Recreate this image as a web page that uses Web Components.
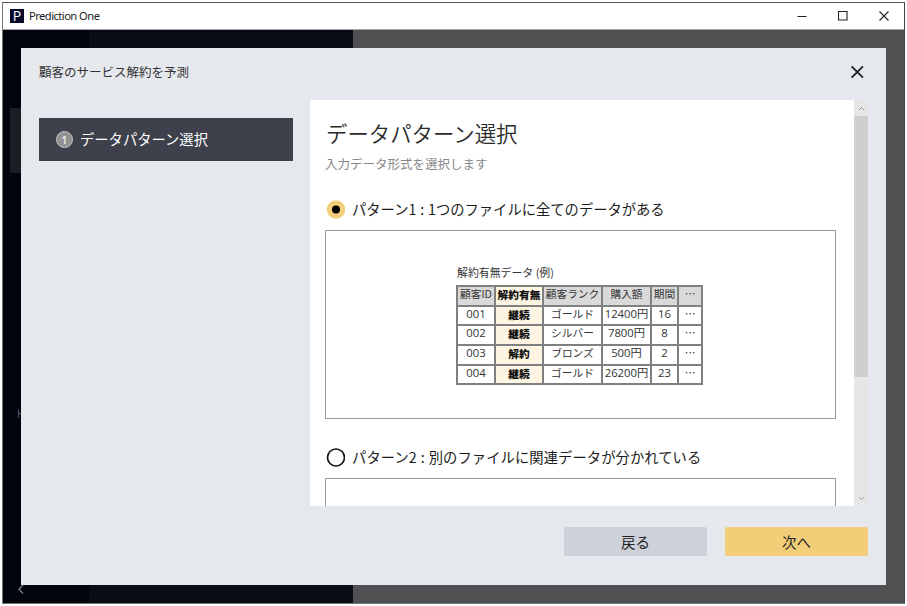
<!DOCTYPE html>
<html lang="ja">
<head>
<meta charset="utf-8">
<title>Prediction One</title>
<style>
html,body{margin:0;width:907px;height:606px;overflow:hidden;background:#fff}
body{font-family:"Noto Sans CJK JP",sans-serif;color:#222}
</style>
</head>
<body>
<app-window></app-window>
<script>
const define = (name, html, setup) => customElements.define(name, class extends HTMLElement {
  constructor() {
    super();
    this.attachShadow({mode: 'open'}).innerHTML = '<style>:host,*{box-sizing:border-box}</style>' + html;
  }
  connectedCallback() { if (setup) setup(this, this.shadowRoot); }
});

define('title-bar', `<style>
:host{display:flex;align-items:center;height:26px;flex:none;background:#fff;padding:0 15px 0 7px;color:#222}
.logo{width:14px;height:14px;background:#06092a;color:#fff;font:14px/14px "Open Sans",sans-serif;text-align:center;margin:-1px 5px 0 0}
.name{flex:1;font:11.2px/16px "Noto Sans",sans-serif;letter-spacing:-.55px}
svg{display:block;margin:-1px 0 0 31px}
</style><span class="logo">P</span><span class="name"><slot></slot></span>
<svg width="10" height="10" viewBox="0 0 10 10"><path d="M.5 5.5h9" stroke="#222"/></svg>
<svg width="10" height="10" viewBox="0 0 10 10"><path d="M.5.5h8.5v8.5H.5z" fill="none" stroke="#222" stroke-width="1.1"/></svg>
<svg width="10" height="10" viewBox="0 0 10 10"><path d="M.5.5l9 9M9.5.5l-9 9" stroke="#222" stroke-width="1.1"/></svg>`);

define('app-window', `<style>
:host{display:flex;flex-direction:column;width:903px;height:602px;margin:2px 0 0 2px;border:1px solid #777;border-top-color:#555;border-right-color:#444}
.body{flex:1;min-height:0;display:grid;grid-template-columns:86px 264px 1fr;position:relative;border-top:1px solid #a5a7a9}
.a{background:#02040d}.b{background:#090c14}.c{background:#4f5051}
.ghost{position:absolute;left:7px;top:78px;width:12px;height:65px;background:#1b1c24}
.h{position:absolute;left:13px;top:377px;font:12px/14px "Noto Sans",sans-serif;color:#555b66}
.back{position:absolute;left:14px;top:554px}
wizard-dialog{position:absolute;left:18px;top:18px}
</style><title-bar>Prediction One</title-bar>
<div class="body"><div class="a"></div><div class="b"></div><div class="c"></div>
<div class="ghost"></div><span class="h">ﾄ</span>
<svg class="back" width="8" height="11" viewBox="0 0 8 11"><path d="M6 1L2 5.2L6 9.4" fill="none" stroke="#777" stroke-width="1.4"/></svg>
<wizard-dialog></wizard-dialog></div>`);

define('wizard-dialog', `<style>
:host{display:flex;flex-direction:column;width:865px;height:537px;background:#e5e9ee;padding:0 18px}
header{height:52px;display:flex;align-items:center;justify-content:space-between;font-size:12.5px;line-height:20px;color:#333;padding:0 4px 4px 0}
main{display:grid;grid-template-columns:254px 558px;column-gap:17px;height:406px}
main step-item{margin-top:18px}
footer{display:flex;justify-content:flex-end;gap:18px;padding-top:21px}
</style><header><span>顧客のサービス解約を予測</span>
<svg width="14" height="14" viewBox="0 0 14 14"><path d="M1.6 1.3l11.4 11.4M13 1.3L1.6 12.7" stroke="#222" stroke-width="1.9"/></svg></header>
<main><step-item n="1">データパターン選択</step-item><pattern-panel></pattern-panel></main>
<footer><wizard-button>戻る</wizard-button><wizard-button primary>次へ</wizard-button></footer>`);

define('step-item', `<style>
:host{display:flex;align-items:center;align-self:start;height:43px;background:#3e404c;color:#fff;padding-left:17px;font-size:14.3px;line-height:22px}
i{width:17px;height:17px;border-radius:50%;border:1px solid #c4c4c4;background:#929292;font:600 11px/15px "Open Sans",sans-serif;text-align:center;margin-right:7px;color:#eee}
span{margin-top:-1px}
</style><i></i><span><slot></slot></span>`, (el, root) => root.querySelector('i').textContent = el.getAttribute('n'));

define('wizard-button', `<style>
:host{display:flex;align-items:center;justify-content:center;width:143px;height:29px;border-radius:2px;background:#cdd1da;color:#222;font-size:14.5px;line-height:22px}
:host([primary]){background:#f3ce79}
</style><span><slot></slot></span>`);

define('pattern-panel', `<style>
:host{display:grid;grid-template-columns:1fr 14px;height:406px;background:#fff}
.content{overflow:hidden;padding:0 18px 0 15px;min-width:0;height:406px}
h1{font-size:21.4px;line-height:32px;font-weight:350;margin:17px 0 0 1px;color:#2a2a2a}
p{font-size:12.5px;line-height:20px;margin:5px 0 24px;color:#888}
.box{height:189px;border:1px solid #999;margin:10px 0 27px;display:flex;flex-direction:column;align-items:center;padding:32px 2px 0 0}
.bar{background:#e6e6e6;display:flex;flex-direction:column;align-items:center;padding:6px 0 5px}
.thumb{width:14px;height:261px;background:#cfcfcf;margin:5px 0 auto}
svg{display:block}
</style><div class="content"><h1>データパターン選択</h1><p>入力データ形式を選択します</p>
<radio-row checked>パターン1 : 1つのファイルに全てのデータがある</radio-row>
<div class="box"><sample-table></sample-table></div>
<radio-row style="letter-spacing:.08px">パターン2 : 別のファイルに関連データが分かれている</radio-row><div class="box"></div></div>
<div class="bar"><svg width="7" height="5" viewBox="0 0 7 5"><path d="M1 4l2.5-2.5L6 4" fill="none" stroke="#999"/></svg><div class="thumb"></div><svg width="7" height="5" viewBox="0 0 7 5"><path d="M1 1l2.5 2.5L6 1" fill="none" stroke="#999"/></svg></div>`);

define('radio-row', `<style>
:host{display:flex;align-items:center;height:22px;font-size:14.3px;line-height:22px;color:#1c1c1c;padding-left:1px;word-spacing:.6px}
svg{margin-right:7px;flex:none}
span{white-space:nowrap}
.dot,.disc{display:none}
:host([checked]) .ring{display:none}
:host([checked]) :is(.dot,.disc){display:inline}
</style><svg width="19" height="19" viewBox="0 0 19 19"><circle class="ring" cx="10" cy="9.5" r="8.5" fill="#fff" stroke="#111" stroke-width="1.7"/><circle class="disc" cx="10" cy="9.5" r="9.3" fill="#f3ce79"/><circle class="dot" cx="10" cy="9.5" r="4" fill="#000"/></svg><span><slot></slot></span>`);

define('sample-table', `<style>
:host{display:block;width:247px}
.cap{font-size:10.9px;line-height:18px;color:#333;padding-left:1px;margin-bottom:4px;white-space:nowrap}
.grid{display:grid;grid-template-columns:36px 46px 57px 47px 25px 22px;grid-template-rows:18px 17px 18px 18px 17px;gap:2px;padding:2px;background:#808080;width:247px}
.grid span{background:#fff;font-size:10.7px;line-height:14px;display:flex;justify-content:center;white-space:nowrap;color:#333}
.grid .hd{background:#d9d9d9}
.grid .key{background:#fdf5e2;font-weight:800;color:#111;padding-top:1px}
.grid .num{font:11.3px/14px "Open Sans","Noto Sans CJK JP",sans-serif}
</style><div class="cap">解約有無データ (例)</div><div class="grid"></div>`, (el, root) => {
  const rows = [
    ['顧客ID','解約有無','顧客ランク','購入額','期間','…'],
    ['001','継続','ゴールド','12400円','16','…'],
    ['002','継続','シルバー','7800円','8','…'],
    ['003','解約','ブロンズ','500円','2','…'],
    ['004','継続','ゴールド','26200円','23','…']];
  root.querySelector('.grid').innerHTML = rows.map((r, y) => r.map((t, x) =>
    `<span class="${x === 1 ? 'key' : y === 0 ? 'hd' : /\d/.test(t) ? 'num' : ''}">${t}</span>`).join('')).join('');
});
</script>
</body>
</html>
